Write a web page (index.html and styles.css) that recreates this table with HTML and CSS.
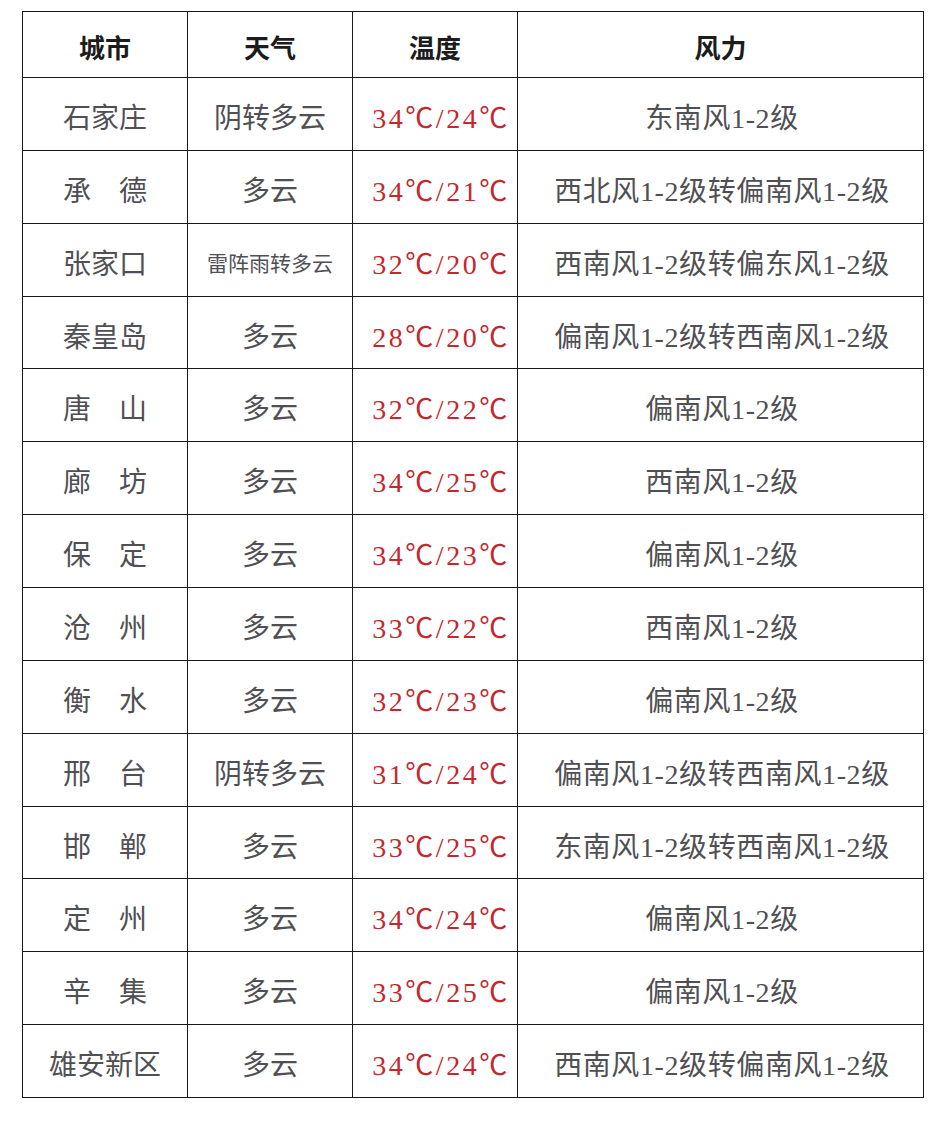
FILE: index.html
```html
<!DOCTYPE html>
<html lang="zh-CN">
<head>
<meta charset="utf-8">
<title>天气预报</title>
<link rel="stylesheet" href="styles.css">
</head>
<body>
<table class="weather">
  <colgroup>
    <col class="c1"><col class="c2"><col class="c3"><col class="c4">
  </colgroup>
  <thead>
    <tr class="head"><th>城市</th><th>天气</th><th>温度</th><th>风力</th></tr>
  </thead>
  <tbody>
    <tr><td>石家庄</td><td>阴转多云</td><td class="t">34℃/24℃</td><td class="w">东南风1-2级</td></tr>
    <tr><td>承　德</td><td>多云</td><td class="t">34℃/21℃</td><td class="w">西北风1-2级转偏南风1-2级</td></tr>
    <tr><td>张家口</td><td class="small">雷阵雨转多云</td><td class="t">32℃/20℃</td><td class="w">西南风1-2级转偏东风1-2级</td></tr>
    <tr><td>秦皇岛</td><td>多云</td><td class="t">28℃/20℃</td><td class="w">偏南风1-2级转西南风1-2级</td></tr>
    <tr><td>唐　山</td><td>多云</td><td class="t">32℃/22℃</td><td class="w">偏南风1-2级</td></tr>
    <tr><td>廊　坊</td><td>多云</td><td class="t">34℃/25℃</td><td class="w">西南风1-2级</td></tr>
    <tr><td>保　定</td><td>多云</td><td class="t">34℃/23℃</td><td class="w">偏南风1-2级</td></tr>
    <tr><td>沧　州</td><td>多云</td><td class="t">33℃/22℃</td><td class="w">西南风1-2级</td></tr>
    <tr><td>衡　水</td><td>多云</td><td class="t">32℃/23℃</td><td class="w">偏南风1-2级</td></tr>
    <tr><td>邢　台</td><td>阴转多云</td><td class="t">31℃/24℃</td><td class="w">偏南风1-2级转西南风1-2级</td></tr>
    <tr><td>邯　郸</td><td>多云</td><td class="t">33℃/25℃</td><td class="w">东南风1-2级转西南风1-2级</td></tr>
    <tr><td>定　州</td><td>多云</td><td class="t">34℃/24℃</td><td class="w">偏南风1-2级</td></tr>
    <tr><td>辛　集</td><td>多云</td><td class="t">33℃/25℃</td><td class="w">偏南风1-2级</td></tr>
    <tr><td>雄安新区</td><td>多云</td><td class="t">34℃/24℃</td><td class="w">西南风1-2级转偏南风1-2级</td></tr>
  </tbody>
</table>
</body>
</html>
```
FILE: styles.css
```css
html, body {
  margin: 0;
  padding: 0;
  background: #ffffff;
}
body {
  padding: 11px 0 0 22px;
  font-family: "Liberation Serif", "Noto Sans CJK SC", serif;
}
.weather {
  border-collapse: collapse;
  table-layout: fixed;
  width: 901px;
}
.c1, .c2, .c3 { width: 165px; }
.c4 { width: 406px; }
.weather th, .weather td {
  border: 1px solid #1a1a1a;
  text-align: center;
  vertical-align: middle;
  padding: 4px 0 0 0;
  white-space: nowrap;
}
.head th {
  height: 61px;
  font-size: 26px;
  font-weight: 700;
  color: #1c1c1c;
}
.weather td {
  height: 67.86px;
  font-size: 28px;
  color: #505054;
}
.weather td.small {
  font-size: 21px;
}
.weather td.t {
  color: #c3282e;
  letter-spacing: 2.5px;
  padding-left: 12px;
}
.weather td.w {
  letter-spacing: 0.6px;
  padding-left: 3px;
}
```
